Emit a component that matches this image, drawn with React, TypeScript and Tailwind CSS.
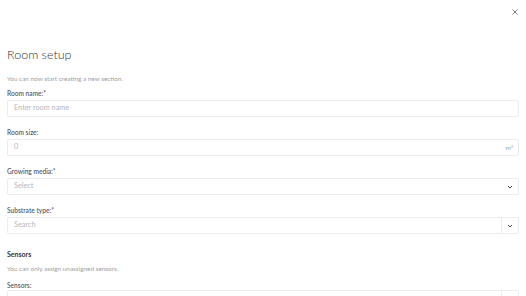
import React from "react";

function Chevron() {
  return (
    <svg width="6" height="4" viewBox="0 0 6 4" className="text-[#4a4f5a]">
      <path d="M1 1l2 2 2-2" fill="none" stroke="currentColor" strokeWidth="1" />
    </svg>
  );
}

function Label({ children }: { children: React.ReactNode }) {
  return (
    <div className="mb-[3px] h-[8px] text-[6.6px] leading-[8px] font-semibold text-[#565c6a]">
      {children}
    </div>
  );
}

function Field({
  label,
  placeholder,
  right,
  divider,
}: {
  label: string;
  placeholder: string;
  right?: React.ReactNode;
  divider?: boolean;
}) {
  return (
    <div>
      <Label>{label}</Label>
      <div className="flex h-[17px] items-center rounded-[2px] border border-[#ececef] bg-white">
        <span className="flex-1 pl-[6px] text-[7.3px] text-[#b4b8c0]">{placeholder}</span>
        {right && (
          <div
            className={
              divider
                ? "flex h-full w-[17px] items-center justify-center border-l border-[#ececef]"
                : "flex h-full items-center pr-[5px]"
            }
          >
            {right}
          </div>
        )}
      </div>
    </div>
  );
}

export default function App() {
  return (
    <div className="relative h-[296px] w-[526px] overflow-hidden bg-white font-['Lato',sans-serif]">
      <button className="absolute right-[8px] top-[9px] text-[#6b6f76]">
        <svg width="6" height="6" viewBox="0 0 6 6">
          <path d="M0.5 0.5l5 5M5.5 0.5l-5 5" stroke="currentColor" strokeWidth="0.9" />
        </svg>
      </button>

      <div className="px-[7px] pt-[46px]">
        <h1 className="text-[12.5px] leading-[18px] font-light text-[#333]">Room setup</h1>
        <p className="mt-[11px] text-[6.4px] leading-[8px] text-[#9a9fa8]">
          You can now start creating a new section.
        </p>

        <div className="mt-[6px] flex flex-col gap-[11px]">
          <Field label="Room name:*" placeholder="Enter room name" />
          <Field
            label="Room size:"
            placeholder="0"
            right={
              <span className="text-[6.4px] text-[#9a9fa8]">
                m<sup className="text-[4px]">2</sup>
              </span>
            }
          />
          <Field label="Growing media:*" placeholder="Select" right={<Chevron />} />
          <Field label="Substrate type:*" placeholder="Search" right={<Chevron />} divider />
        </div>

        <h2 className="mt-[16px] text-[7px] leading-[9px] font-bold text-[#2f3440]">Sensors</h2>
        <p className="mt-[6px] text-[6.4px] leading-[8px] text-[#9a9fa8]">
          You can only assign unassigned sensors.
        </p>
        <div className="mt-[8px]">
          <div className="mb-[1px] h-[8px] text-[6.6px] leading-[8px] font-semibold text-[#565c6a]">
            Sensors:
          </div>
          <div className="flex h-[17px] rounded-[2px] border border-[#ececef]">
            <div className="flex-1" />
            <div className="w-[17px] border-l border-[#ececef]" />
          </div>
        </div>
      </div>
    </div>
  );
}
